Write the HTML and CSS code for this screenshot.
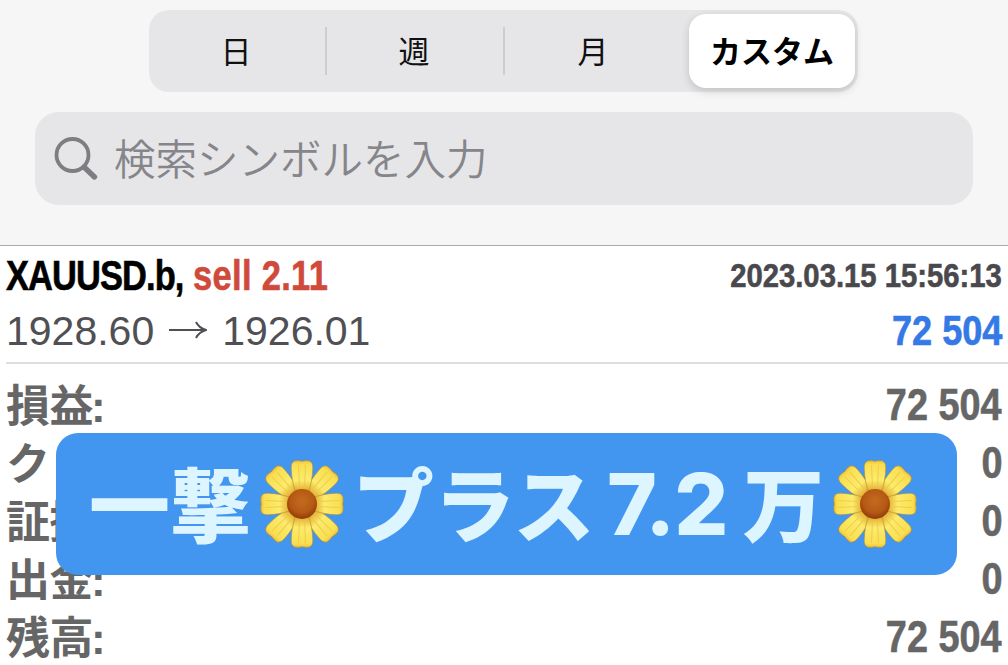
FILE: index.html
```
<!DOCTYPE html>
<html lang="ja">
<head>
    <meta charset="UTF-8">
    <meta name="viewport" content="width=device-width, initial-scale=1.0">
    <title>取引履歴</title>
    <link rel="stylesheet" href="styles.css">
</head>
<body>

    <header>
        <div class="segments">
            <div class="segment">日</div>
            <div class="segment">週</div>
            <div class="segment">月</div>
            <div class="segment active">カスタム</div>
        </div>
        <div class="search">
            <svg class="search-icon" viewBox="0 0 46 46">
                <circle cx="18.500" cy="19" r="16"/>
                <path d="M30 31 L40.500 41" class="handle"/>
            </svg>
            <span>検索シンボルを入力</span>
        </div>
    </header>

    <div class="trade">
        <div class="line title-line">
            <div class="symbol"><span class="name">XAUUSD.b,</span> <span class="sell">sell 2.11</span></div>
            <div class="time">2023.03.15 15:56:13</div>
        </div>
        <div class="line price-line">
            <div class="prices">
                <span>1928.60</span>
                <svg class="arrow" viewBox="0 0 38 20"><path d="M0 10 H36 M27 2 Q30 8 37 10 Q30 12 27 18"/></svg>
                <span>1926.01</span>
            </div>
            <div class="profit">72 504</div>
        </div>
    </div>

    <div class="summary">
        <div class="row"><span>損益<i>:</i></span><b>72 504</b></div>
        <div class="row"><span>ク</span><b>0</b></div>
        <div class="row"><span class="clipped">証拠</span><b>0</b></div>
        <div class="row"><span>出金<i>:</i></span><b>0</b></div>
        <div class="row"><span>残高<i>:</i></span><b>72 504</b></div>

        <div class="banner">
            <span class="kanji">一撃</span>
            <svg class="flower" viewBox="-42 -44 84 88">
                <defs>
                    <linearGradient id="petal" x1="0" y1="0" x2="0" y2="1">
                        <stop offset="0" stop-color="#ecc040"/>
                        <stop offset="0.12" stop-color="#f9df50"/>
                        <stop offset="0.65" stop-color="#fdeb6c"/>
                        <stop offset="1" stop-color="#e0ab30"/>
                    </linearGradient>
                    <radialGradient id="core" cx="0.5" cy="0.4" r="0.6">
                        <stop offset="0" stop-color="#c26c20"/>
                        <stop offset="0.65" stop-color="#b55914"/>
                        <stop offset="1" stop-color="#92390a"/>
                    </radialGradient>
                    <g id="leaf">
                        <path d="M-7 -13 C-9 -20 -10.500 -27 -10.800 -36 Q-11 -42 -7 -43.200 Q-3 -43.700 0 -42.800 Q3 -43.700 7 -43.200 Q11 -42 10.800 -36 C10.500 -27 9 -20 7 -13 Z" fill="url(#petal)" stroke="#b58a2c" stroke-width="0.6"/>
                        <path d="M-3.500 -39 L-2.500 -17 M3.500 -39 L2.500 -17" fill="none" stroke="#ebc94a" stroke-width="0.9"/>
                    </g>
                    <g id="daisy">
                        <use href="#leaf" transform="rotate(43) scale(1 1.04)"/>
                        <use href="#leaf" transform="rotate(137) scale(1 1.04)"/>
                        <use href="#leaf" transform="rotate(223) scale(1 1.04)"/>
                        <use href="#leaf" transform="rotate(317) scale(1 1.04)"/>
                        <use href="#leaf"/>
                        <use href="#leaf" transform="rotate(90) scale(1 0.95)"/>
                        <use href="#leaf" transform="rotate(180)"/>
                        <use href="#leaf" transform="rotate(270) scale(1 0.95)"/>
                        <circle r="15" fill="url(#core)"/>
                    </g>
                </defs>
                <use href="#daisy"/>
            </svg>
            <span class="kana">プラス</span>
            <span class="number">7.2</span>
            <span class="man">万</span>
            <svg class="flower" viewBox="-42 -44 84 88"><use href="#daisy"/></svg>
        </div>
    </div>

</body>
</html>
```

FILE: styles.css
```
* {
    box-sizing: border-box;
}
body {
    font-family: "Liberation Sans", "Noto Sans CJK JP", sans-serif;
    margin: 0;
    height: 665px;
    overflow: hidden;
    background: #fff;
    white-space: nowrap;
}
header {
    height: 246px;
    padding: 10px 35px 0;
    background: #f6f6f7;
    border-bottom: 1px solid #a9a9ac;
    font-family: "Noto Sans CJK JP", sans-serif;
}
.segments {
    display: grid;
    grid-template-columns: 178px 178px 178px 1fr;
    width: 709px;
    height: 82px;
    margin-left: 114px;
    background: #e6e6e8;
    border-radius: 20px;
}
.segment {
    display: flex;
    align-items: center;
    justify-content: center;
    margin: 17px 0;
    padding-bottom: 3px;
    padding-right: 2px;
    font-size: 31px;
    line-height: 44px;
    color: #111;
}
.segment:nth-child(1), .segment:nth-child(2) {
    border-right: 2px solid #cdcdd0;
}
.segment.active {
    margin: 4px 3px 4px 6px;
    padding-right: 0;
    background: #fff;
    border-radius: 17px;
    box-shadow: 0 3px 8px rgba(0, 0, 0, 0.16);
    font-weight: 700;
    color: #000;
}
.search {
    display: flex;
    align-items: center;
    gap: 14px;
    width: 938px;
    height: 93px;
    margin-top: 20px;
    padding-left: 19px;
    background: #e6e6e8;
    border-radius: 24px;
    font-size: 41.5px;
    font-weight: 350;
    line-height: 60px;
    color: #85858a;
}
.search span {
    padding-bottom: 3px;
}
.search-icon {
    width: 46px;
    height: 46px;
    fill: none;
    stroke: #7e7e82;
    stroke-width: 3.8;
    stroke-linecap: round;
}
.search-icon .handle {
    stroke-width: 5.4;
}
.trade {
    height: 118px;
    margin-left: 6px;
    border-bottom: 2px solid #dedede;
}
.line {
    display: flex;
    justify-content: space-between;
    padding-right: 6px;
}
/* condensed bold */
.symbol, .time, .profit, .row b {
    font-weight: 700;
    transform: scaleX(0.86);
    transform-origin: right;
    -webkit-text-stroke: 0.6px;
}
.title-line {
    height: 60px;
    line-height: 60px;
}
.symbol {
    font-size: 42px;
    transform: scaleX(0.82);
    transform-origin: left;
}
.name {
    letter-spacing: -1.1px;
}
.sell {
    letter-spacing: 0.4px;
    color: #cf4a3b;
}
.time {
    font-size: 34px;
    line-height: 58px;
    color: #48484d;
}
.price-line {
    height: 50px;
    line-height: 50px;
}
.prices {
    display: flex;
    align-items: center;
    font-size: 41px;
    color: #505054;
}
.arrow {
    width: 38px;
    height: 20px;
    margin: 0 15px 2px;
    fill: none;
    stroke: #505054;
    stroke-width: 2;
}
.profit {
    font-size: 42px;
    color: #3579e6;
}
.summary {
    position: relative;
    padding: 12px 6px 0;
}
.row {
    display: flex;
    justify-content: space-between;
    height: 58px;
    line-height: 58px;
    font-size: 44px;
    color: #666;
}
.row span {
    line-height: 54px;
    font-family: "Noto Sans CJK JP", sans-serif;
    font-weight: 700;
    letter-spacing: -0.5px;
}
.row i {
    font-family: "Liberation Sans", sans-serif;
    font-style: normal;
    margin-left: -2px;
}
.row .clipped {
    width: 56px;
    overflow: hidden;
}
/* label lies over the middle rows */
.banner {
    position: absolute;
    left: 56px;
    top: 69px;
    display: flex;
    align-items: center;
    width: 901px;
    height: 142px;
    padding-left: 33px;
    background: #4396f0;
    border-radius: 22px;
    font-family: "Noto Sans CJK JP", sans-serif;
    font-size: 81px;
    font-weight: 900;
    line-height: 136px;
    color: #dcf5ff;
}
.banner span {
    height: 142px;
}
.flower {
    flex: none;
    width: 84px;
    height: 88px;
    margin-left: 9px;
}
.kana {
    width: 243px;
    margin-left: 9px;
}
.number {
    width: 130px;
    margin-left: 11px;
    font-family: Inter, sans-serif;
    font-size: 85px;
    font-weight: 800;
    line-height: 143px;
    letter-spacing: -1px;
}
.man {
    margin-left: 6px;
}
```
